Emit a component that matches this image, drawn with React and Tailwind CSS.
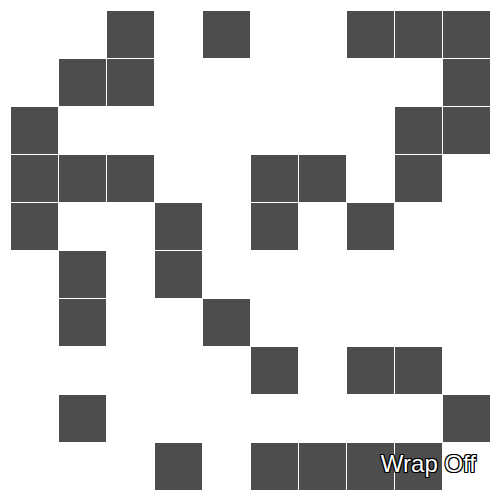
import React from "react";

const rows = [
  [2, 4, 7, 8, 9],
  [1, 2, 9],
  [0, 8, 9],
  [0, 1, 2, 5, 6, 8],
  [0, 3, 5, 7],
  [1, 3],
  [1, 4],
  [5, 7, 8],
  [1, 9],
  [3, 5, 6, 7, 8],
];

export default function App() {
  const cells = [];
  rows.forEach((r, ri) => {
    for (let c = 0; c < 10; c++) {
      cells.push(
        <div
          key={ri + "-" + c}
          className={r.includes(c) ? "bg-[#4d4d4d]" : "bg-white"}
        />
      );
    }
  });
  return (
    <div className="relative w-[502px] h-[502px] bg-white overflow-hidden">
      <div className="pt-[11px] pl-[11px]">
        <div className="grid grid-cols-[repeat(10,47px)] grid-rows-[repeat(10,47px)] gap-px">
          {cells}
        </div>
      </div>
      <div
        className="absolute right-[26px] top-[450px] text-[24px] leading-[28px] text-white [font-family:'Liberation_Sans',Arial,sans-serif] [text-shadow:-1px_0_0_#000,1px_0_0_#000,0_-1px_0_#000,0_1px_0_#000,-1px_-1px_0_#000,1px_1px_0_#000,-1px_1px_0_#000,1px_-1px_0_#000]"
      >
        Wrap Off
      </div>
    </div>
  );
}
